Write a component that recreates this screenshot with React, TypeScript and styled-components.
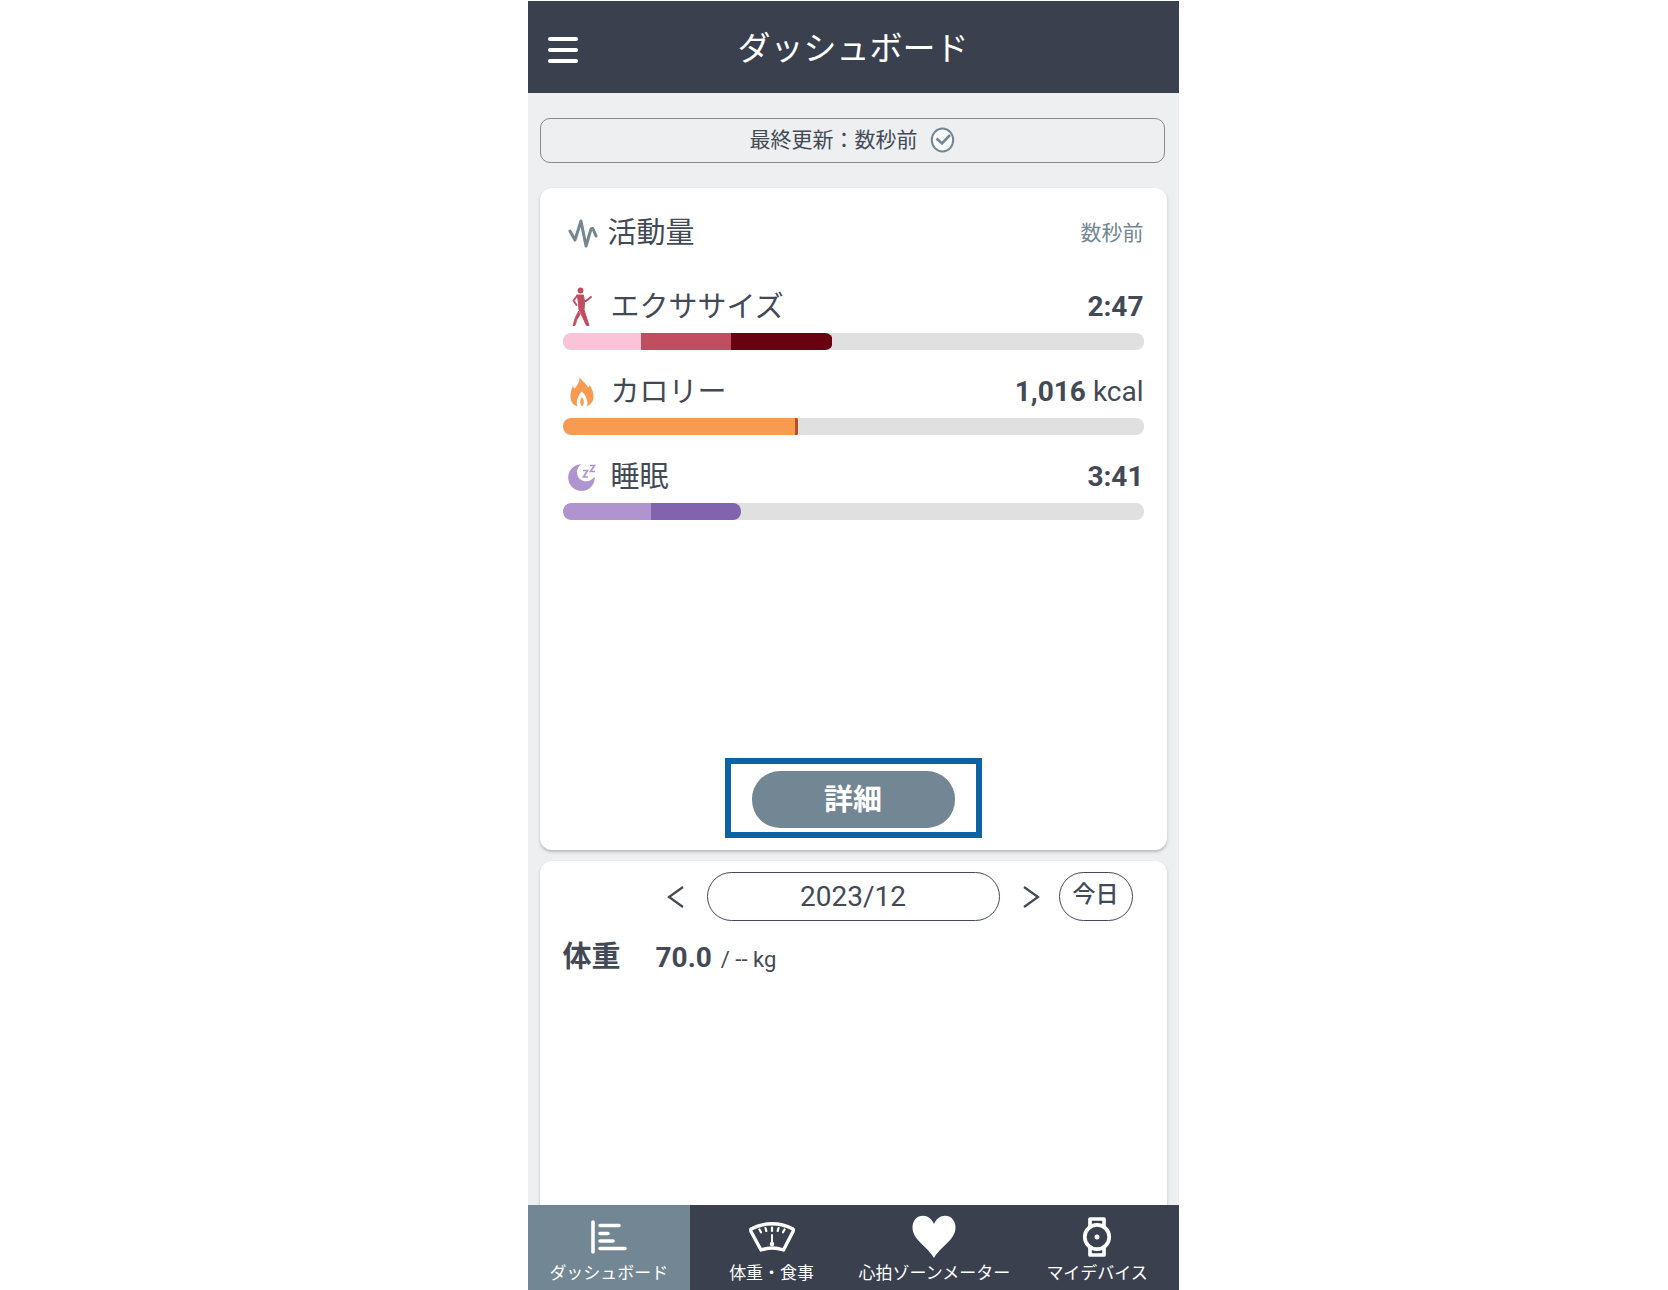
import React from "react";
import styled, { createGlobalStyle } from "styled-components";

const ink = "#434955";
const navy = "#3a404e";
const slate = "#738694";

const GlobalStyle = createGlobalStyle`
  *, *::before, *::after { box-sizing: border-box; }
  body {
    margin: 0;
    background: #fff;
    color: ${ink};
    font-family: Roboto, "Noto Sans CJK JP", sans-serif;
  }
  button { font: inherit; color: inherit; padding: 0; border: 0; background: none; cursor: pointer; }
  h1, h2, p { margin: 0; font-weight: 400; }
  svg { display: block; flex: none; }
`;

const Page = styled.div`
  display: flex;
  justify-content: center;
  height: 100vh;
  padding: 1px 0 0 38px;
`;

const Phone = styled.div`
  display: flex;
  flex-direction: column;
  width: 100%;
  max-width: 651px;
  background: #edeff1;
`;

const Header = styled.header`
  display: grid;
  grid-template-columns: 72px 1fr 72px;
  align-items: center;
  flex: none;
  height: 92px;
  padding-top: 3px;
  background: ${navy};
  color: #fff;
`;

const MenuButton = styled.button`
  display: grid;
  align-content: center;
  gap: 7px;
  height: 56px;
  padding: 3px 20px 0;
`;

const MenuLine = styled.span`
  display: block;
  width: 30px;
  height: 4px;
  border-radius: 2px;
  background: #fff;
`;

const Title = styled.h1`
  font-size: 33px;
  line-height: 48px;
  text-align: center;
`;

const Content = styled.main`
  display: flex;
  flex-direction: column;
  flex: 1;
  min-height: 0;
  padding: 25px 12px 0;
  overflow: hidden;
`;

const SyncButton = styled.button`
  display: flex;
  align-items: center;
  justify-content: center;
  gap: 12px;
  flex: none;
  height: 45px;
  margin-right: 2px;
  margin-bottom: 25px;
  padding-bottom: 1px;
  border: 1px solid #858a8f;
  border-radius: 10px;
  font-size: 21px;
  line-height: 30px;
`;

const Card = styled.section`
  display: flex;
  flex-direction: column;
  flex: none;
  padding: 0 23px;
  border-radius: 12px;
  background: #fff;
  box-shadow: 0 2px 3px rgba(60, 66, 80, 0.3);
`;

const ActivityCard = styled(Card)`
  height: 662px;
  padding-top: 24px;
  padding-bottom: 12px;
  margin-bottom: 11px;
`;

const BodyCard = styled(Card)`
  flex: 1 0 auto;
  padding-top: 11px;
  border-radius: 12px 12px 0 0;
`;

const CardHeader = styled.div`
  display: flex;
  align-items: center;
  gap: 10px;
  height: 42px;
  padding-left: 5px;
`;

const CardTitle = styled.h2`
  flex: 1;
  font-size: 29px;
  line-height: 42px;
`;

const Ago = styled.span`
  font-size: 21px;
  line-height: 30px;
  color: ${slate};
`;

const Metrics = styled.div`
  display: grid;
  gap: 21px;
  margin-top: 32px;
`;

const MetricHead = styled.div`
  display: flex;
  align-items: center;
  height: 42px;
  margin-bottom: 5px;
`;

const MetricIcon = styled.span`
  display: grid;
  place-items: center;
  width: 38px;
  height: 42px;
  margin-right: 10px;
`;

const MetricName = styled.span`
  flex: 1;
  font-size: 29px;
  line-height: 42px;
`;

const MetricValue = styled.span`
  font-size: 28px;
  line-height: 42px;
`;

const Track = styled.div`
  display: flex;
  height: 17px;
  overflow: hidden;
  border-radius: 8px;
  background: #e0e0e0;
`;

const Fill = styled.div<{ $square?: boolean }>`
  display: flex;
  overflow: hidden;
  border-radius: ${(p) => (p.$square ? "8px 3px 3px 8px" : "8px")};
`;

const Segment = styled.div<{ $color: string }>`
  flex: none;
  background: ${(p) => p.$color};
`;

const Highlight = styled.div`
  align-self: center;
  margin-top: auto;
  padding: 7px 21px 4px;
  border: 6px solid #0b62a4;
`;

const DetailButton = styled.button`
  display: block;
  width: 203px;
  height: 57px;
  border-radius: 28px;
  background: ${slate};
  color: #fff;
  font-size: 29px;
  font-weight: 700;
  line-height: 42px;
`;

const MonthBar = styled.div`
  display: flex;
  align-items: center;
  justify-content: flex-end;
  padding-right: 11px;
`;

const ArrowButton = styled.button<{ $next?: boolean }>`
  display: grid;
  place-items: center;
  width: 59px;
  height: 49px;
  padding: ${(p) => (p.$next ? "0 0 0 4px" : "0 4px 0 0")};
`;

const Pill = styled.button<{ $wide?: boolean }>`
  width: ${(p) => (p.$wide ? "293px" : "74px")};
  height: 49px;
  padding-bottom: ${(p) => (p.$wide ? "0" : "3px")};
  border: 1px solid ${ink};
  border-radius: 25px;
  font-size: ${(p) => (p.$wide ? "28px" : "23px")};
  font-weight: ${(p) => (p.$wide ? 400 : 500)};
  line-height: 42px;
`;

const WeightRow = styled.p`
  display: flex;
  align-items: baseline;
  margin-top: 15px;
  font-size: 28px;
  line-height: 42px;
`;

const WeightLabel = styled.span`
  width: 93px;
  font-size: 29px;
  font-weight: 700;
`;

const Unit = styled.span`
  margin-left: 9px;
  font-size: 22px;
`;

const TabBar = styled.nav`
  display: grid;
  grid-template-columns: repeat(4, 1fr);
  flex: none;
  height: 85px;
  background: ${navy};
`;

const Tab = styled.a<{ $active?: boolean }>`
  display: flex;
  flex-direction: column;
  align-items: center;
  padding-top: 9px;
  background: ${(p) => (p.$active ? slate : "transparent")};
  color: #fff;
  font-size: 17px;
  line-height: 26px;
  white-space: nowrap;
  text-decoration: none;
`;

const TabIcon = styled.span`
  display: grid;
  place-items: center;
  height: 46px;
`;

const CheckIcon = () => (
  <svg width="25" height="26" viewBox="0 0 25 26" fill="none" stroke={slate} aria-hidden="true">
    <ellipse cx="12.5" cy="13" rx="10.7" ry="11.4" strokeWidth="2" fill="#f8fafb" />
    <path d="M6.500 11.500l5.500 5 8-8.500" strokeWidth="2.600" />
  </svg>
);

const PulseIcon = () => (
  <svg width="30" height="30" viewBox="0 0 30 30" fill="none" stroke={slate} strokeWidth="3" strokeLinecap="round" strokeLinejoin="round" aria-hidden="true">
    <path d="M2 13l5 9 6-19 5 25 5-17q1.500-1.500 2.500 1l2.500 6" />
  </svg>
);

const WalkIcon = () => (
  <svg width="20" height="40" viewBox="0 0 20 40" fill="none" stroke="#c04e60" strokeLinejoin="round" aria-hidden="true">
    <circle cx="8.500" cy="3.500" r="2.900" fill="#c04e60" stroke="none" />
    <path d="M4.500 8h7l1 7-.5 8 5 15.500h-2.500L7 22.500 6 12z" fill="#c04e60" strokeWidth="1" />
    <path d="M5 9L1.500 13.500 4.500 18" strokeWidth="1.900" strokeLinecap="round" />
    <path d="M11.500 14l2.500 0 5-4" strokeWidth="2" strokeLinecap="round" />
    <path d="M6.500 24l1.500 3.500-3 5L3 38.500H1l2-7z" fill="#c04e60" strokeWidth="0.800" />
  </svg>
);

const FlameIcon = () => (
  <svg width="24" height="30" viewBox="0 0 24 30" fill="#f69b4f" aria-hidden="true">
    <path d="M9.500 0c2 4 7 6.500 8.500 10.500 1-.5 1.300-1.500 1.500-2.500 2.500 3.500 4.300 8 4 12.500-.3 4-2.500 7-6.500 9 1.500-5-1-11-5-15-4 4-6.500 10-4.500 15C3 28 .5 24.500.5 20 .3 15.500 1.500 12 3 8.500c.3 1.500.8 2.500 1.500 3C8 8 9.700 4 9.500 0z" />
    <path d="M12 20c2.500 3.500 2.500 6.500 0 9.500-2.500-3-2.500-6 0-9.500z" />
  </svg>
);

const MoonIcon = () => (
  <svg width="28" height="28" viewBox="0 0 28 28" fill="none" aria-hidden="true">
    <circle cx="13.500" cy="14.500" r="13.300" fill="#b094cf" />
    <path d="M17 0a9.200 9.200 0 1 0 5 17.500Q25.500 15.500 28 13V0z" fill="#fff" />
    <path d="M15 7.500h4.500l-4 6.500H20M22 2.500h4.500l-4 6H27" stroke="#b094cf" strokeWidth="1.700" />
  </svg>
);

const Chevron = ({ flip }: { flip?: boolean }) => (
  <svg width="17" height="24" viewBox="0 0 17 24" fill="none" stroke={ink} strokeWidth="2.200" aria-hidden="true">
    <path d={flip ? "M1 2l14 10L1 22" : "M16 2L2 12l14 10"} />
  </svg>
);

const ChartIcon = () => (
  <svg width="36" height="34" viewBox="0 0 36 34" fill="none" stroke="#fff" strokeWidth="3.600" strokeLinecap="round" aria-hidden="true">
    <path d="M2 2v30M9 5.500h19M9 13.500h8M9 21h13M9 28.500h25" />
  </svg>
);

const ScaleIcon = () => (
  <svg width="46" height="30" viewBox="0 0 46 30" fill="none" stroke="#fff" strokeLinecap="round" strokeLinejoin="round" aria-hidden="true">
    <path d="M2 7Q23-3.500 44 7q.7 1 0 2.500L34.500 28Q23 24 12 28L2 9.500Q1.500 8 2 7z" strokeWidth="3.400" />
    <path d="M10.500 7.500l1.500 2.800M16.500 6l.8 3M23 5.500v3.500M29.500 6l-.8 3M35.500 7.500l-1.500 2.800" strokeWidth="2.200" />
    <path d="M23 13v9" strokeWidth="2" />
    <circle cx="23" cy="22" r="1.500" fill="#fff" strokeWidth="1.500" />
  </svg>
);

const HeartIcon = () => (
  <svg width="44" height="44" viewBox="0 0 44 44" fill="#fff" aria-hidden="true">
    <path d="M22 43C16 32 .5 25 .5 12.500.5 5.500 5 .8 11 .8c5 0 8.500 3 11 8.200C24.500 3.800 28 .8 33 .8c6 0 10.500 4.700 10.500 11.700C43.500 25 28 32 22 43z" />
  </svg>
);

const WatchIcon = () => (
  <svg width="30" height="42" viewBox="0 0 30 42" fill="none" stroke="#fff" strokeWidth="3.700" aria-hidden="true">
    <circle cx="15" cy="21" r="12.200" />
    <circle cx="15" cy="21" r="2.500" fill="#fff" stroke="none" />
    <path d="M8 11V3h14v8M8 31v8h14v-8" strokeLinejoin="round" />
  </svg>
);

type MetricData = {
  name: string;
  value: string;
  unit?: string;
  icon: React.ReactNode;
  parts: { color: string; share: number }[];
};

const metrics: MetricData[] = [
  {
    name: "エクササイズ",
    value: "2:47",
    icon: <WalkIcon />,
    parts: [
      { color: "#fac3d8", share: 79 },
      { color: "#c04e60", share: 90 },
      { color: "#680010", share: 101 },
    ],
  },
  {
    name: "カロリー",
    value: "1,016",
    unit: "kcal",
    icon: <FlameIcon />,
    parts: [
      { color: "#f69b4f", share: 232 },
      { color: "#b1522c", share: 4 },
    ],
  },
  {
    name: "睡眠",
    value: "3:41",
    icon: <MoonIcon />,
    parts: [
      { color: "#b094cf", share: 88 },
      { color: "#8263ad", share: 90 },
    ],
  },
];

const FULL_SCALE = 581;

const Metric = ({ name, value, unit, icon, parts }: MetricData) => {
  const total = parts.reduce((sum, p) => sum + p.share, 0);
  return (
    <div>
      <MetricHead>
        <MetricIcon>{icon}</MetricIcon>
        <MetricName>{name}</MetricName>
        <MetricValue>
          <b>{value}</b>
          {unit && ` ${unit}`}
        </MetricValue>
      </MetricHead>
      <Track>
        <Fill $square={!!unit} style={{ width: `${(total / FULL_SCALE) * 100}%` }}>
          {parts.map((p) => (
            <Segment key={p.color} $color={p.color} style={{ width: `${(p.share / total) * 100}%` }} />
          ))}
        </Fill>
      </Track>
    </div>
  );
};

const tabs = [
  { label: "ダッシュボード", icon: <ChartIcon /> },
  { label: "体重・食事", icon: <ScaleIcon /> },
  { label: "心拍ゾーンメーター", icon: <HeartIcon /> },
  { label: "マイデバイス", icon: <WatchIcon /> },
];

export default function App() {
  return (
    <>
      <GlobalStyle />
      <Page lang="ja">
        <Phone>
          <Header>
            <MenuButton aria-label="メニュー">
              <MenuLine />
              <MenuLine />
              <MenuLine />
            </MenuButton>
            <Title>ダッシュボード</Title>
          </Header>
          <Content>
            <SyncButton>
              最終更新：数秒前
              <CheckIcon />
            </SyncButton>
            <ActivityCard>
              <CardHeader>
                <PulseIcon />
                <CardTitle>活動量</CardTitle>
                <Ago>数秒前</Ago>
              </CardHeader>
              <Metrics>
                {metrics.map((m) => (
                  <Metric key={m.name} {...m} />
                ))}
              </Metrics>
              <Highlight>
                <DetailButton>詳細</DetailButton>
              </Highlight>
            </ActivityCard>
            <BodyCard>
              <MonthBar>
                <ArrowButton aria-label="前の月">
                  <Chevron />
                </ArrowButton>
                <Pill $wide>2023/12</Pill>
                <ArrowButton $next aria-label="次の月">
                  <Chevron flip />
                </ArrowButton>
                <Pill>今日</Pill>
              </MonthBar>
              <WeightRow>
                <WeightLabel>体重</WeightLabel>
                <b>70.0</b>
                <Unit>/ -- kg</Unit>
              </WeightRow>
            </BodyCard>
          </Content>
          <TabBar>
            {tabs.map((t, i) => (
              <Tab key={t.label} href="#" $active={i === 0}>
                <TabIcon>{t.icon}</TabIcon>
                {t.label}
              </Tab>
            ))}
          </TabBar>
        </Phone>
      </Page>
    </>
  );
}
